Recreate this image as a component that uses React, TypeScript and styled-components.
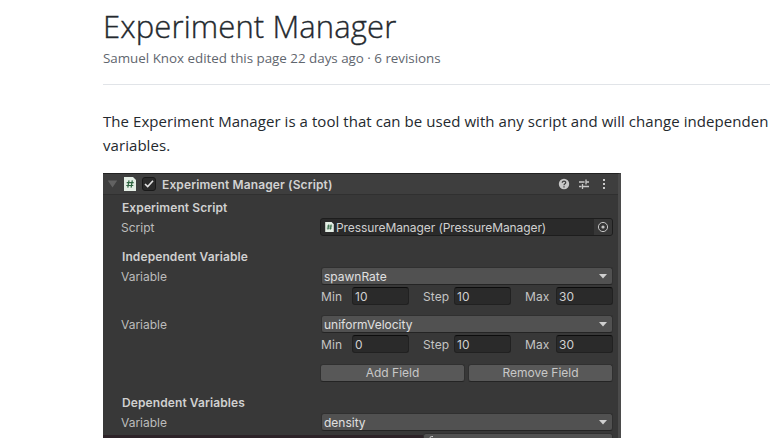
import React from "react";
import styled, { createGlobalStyle } from "styled-components";

const GlobalStyle = createGlobalStyle`
  * { box-sizing: border-box; }
  html, body { margin: 0; height: 438px; overflow: hidden; background: #fff; }
`;

const Page = styled.main`
  width: 770px;
  height: 438px;
  padding-left: 103px;
  overflow: hidden;
  font-family: "Open Sans", "Noto Sans", sans-serif;
  color: #24292e;
`;

const Title = styled.h1`
  margin: 0;
  padding-top: 3px;
  height: 47px;
  font-size: 31px;
  line-height: 46px;
  font-weight: 300;
  -webkit-text-stroke: 0.35px #24292e;
  white-space: nowrap;
  letter-spacing: 0.11px;
`;

const Meta = styled.div`
  height: 38px;
  border-bottom: 1px solid #e1e4e8;
  font-size: 13.4px;
  line-height: 23px;
  color: #5f666e;
  white-space: nowrap;
  letter-spacing: -0.02px;
`;

const Intro = styled.p`
  margin: 24px 0 16px;
  width: 800px;
  height: 48px;
  font-size: 15px;
  line-height: 24px;
  white-space: nowrap;
  letter-spacing: 0.06px;
`;

const Panel = styled.section`
  width: 518px;
  height: 265px;
  overflow: hidden;
  border-top: 1px solid #222;
  border-right: 3px solid #4b4b4b;
  background: #383838;
  color: #c4c4c4;
  font-family: Inter, sans-serif;
  font-size: 12px;
  white-space: nowrap;
`;

const Header = styled.header`
  display: flex;
  align-items: center;
  height: 21px;
  padding: 0 8px 0 4px;
  background: #3e3e3e;
  border-bottom: 1px solid #303030;
`;

const HeaderTitle = styled.span`
  flex: 1;
  margin-left: 6px;
  font-weight: 600;
  color: #d2d2d2;
  letter-spacing: 0.12px;
`;

const Check = styled.span`
  display: flex;
  width: 14px;
  height: 14px;
  margin-left: 6px;
  border: 1px solid #191919;
  border-radius: 3px;
  background: #2a2a2a;
`;

const Tools = styled.span`
  display: flex;
  gap: 8px;
`;

const Row = styled.div<{ $top?: number }>`
  display: flex;
  align-items: center;
  height: 18px;
  margin-top: ${(p) => p.$top ?? 0}px;
  padding-left: 18px;
`;

const Heading = styled.h2`
  margin: 0 0 0 1px;
  font-size: 12px;
  font-weight: 600;
  line-height: 18px;
  color: #d0d0d0;
  letter-spacing: 0.1px;
`;

const Label = styled.span`
  width: 199px;
  flex: none;
  color: #bcbcbc;
`;

const ObjectField = styled.div`
  display: flex;
  align-items: center;
  width: 293px;
  height: 18px;
  padding-left: 4px;
  gap: 2px;
  border: 1px solid #1d1d1d;
  border-radius: 3px;
  background: #2a2a2a;
  overflow: hidden;
`;

const ObjectName = styled.span`
  flex: 1;
  color: #d0d0d0;
  letter-spacing: -0.08px;
`;

const Picker = styled.span`
  display: flex;
  align-items: center;
  justify-content: center;
  width: 18px;
  height: 16px;
  background: #373737;
`;

const Select = styled.div`
  display: flex;
  align-items: center;
  justify-content: space-between;
  width: 292px;
  height: 18px;
  margin-left: 1px;
  padding: 0 5px 0 2px;
  border: 1px solid #303030;
  border-bottom-color: #242424;
  border-radius: 3px;
  background: #515151;
  color: #e0e0e0;
`;

const Range = styled.div`
  display: flex;
  align-items: center;
  height: 18px;
  margin: 2px 0 0 218px;
`;

const RangeLabel = styled.span`
  width: 31px;
  flex: none;
  letter-spacing: 0.1px;
`;

const NumberBox = styled.span`
  width: 57px;
  flex: none;
  height: 18px;
  margin-right: 14px;
  padding-left: 2px;
  border: 1px solid #212121;
  border-top-color: #0d0d0d;
  border-radius: 3px;
  background: #2a2a2a;
  color: #d0d0d0;
  line-height: 17px;
`;

const Buttons = styled.div`
  display: flex;
  gap: 3px;
  margin: 11px 0 0 217px;
`;

const Button = styled.button`
  width: 145px;
  height: 18px;
  padding: 0;
  border: 1px solid #303030;
  border-bottom-color: #242424;
  border-radius: 3px;
  background: #585858;
  color: #c8c8c8;
  font: inherit;
  line-height: 16px;
`;

const NextField = styled.div`
  display: flex;
  height: 7px;
  overflow: hidden;
`;

const DarkEdge = styled.span`
  width: 320px;
  height: 3px;
  margin-top: 4px;
  background: #2d2328;
`;

const PartialSelect = styled.span`
  width: 190px;
  height: 18px;
  margin-top: 2px;
  padding-left: 5px;
  border: 1px solid #303030;
  border-radius: 3px;
  background: #515151;
  line-height: 0;
`;

const ScriptIcon = ({ width, height }: { width: number; height: number }) => (
  <svg width={width} height={height} viewBox="0 0 12 14">
    <path d="M0 0H9L12 3V14H0Z" fill="#e4eee5" />
    <path d="M5 3.4 3.8 10.7M8.3 3.4 7.1 10.7M2.7 5.7H9.7M2.3 8.5H9.3" stroke="#2d6440" strokeWidth="1.2" />
  </svg>
);

const HeaderScriptIcon = styled.span`
  display: flex;
  margin-left: 6px;
`;

const Caret = () => (
  <svg width="8" height="5" viewBox="0 0 8 5"><path d="M0 0H8L4 4.5Z" fill="#d0d0d0" /></svg>
);

const Dropdown = ({ value }: { value: string }) => (
  <Select><span>{value}</span><Caret /></Select>
);

const RangeFields = ({ values }: { values: [string, string, string] }) => (
  <Range>
    {["Min", "Step", "Max"].map((name, i) => (
      <React.Fragment key={name}>
        <RangeLabel>{name}</RangeLabel>
        <NumberBox>{values[i]}</NumberBox>
      </React.Fragment>
    ))}
  </Range>
);

export default function App() {
  return (
    <Page>
      <GlobalStyle />
      <Title>Experiment Manager</Title>
      <Meta>Samuel Knox edited this page 22 days ago · 6 revisions</Meta>
      <Intro>
        The Experiment Manager is a tool that can be used with any script and will change independen
        <br />
        variables.
      </Intro>
      <Panel>
        <Header>
          <svg width="11" height="8" viewBox="0 0 11 8"><path d="M.8 .5H10.2L5.5 7.5Z" fill="#626262" /></svg>
          <HeaderScriptIcon><ScriptIcon width={12} height={14} /></HeaderScriptIcon>
          <Check>
            <svg width="12" height="12" viewBox="0 0 12 12"><path d="m2 6 2.7 2.6L10 2.8" fill="none" stroke="#e2e2e2" strokeWidth="1.6" /></svg>
          </Check>
          <HeaderTitle>Experiment Manager (Script)</HeaderTitle>
          <Tools>
            <svg width="12" height="12" viewBox="0 0 12 12">
              <circle cx="6" cy="6" r="5.2" fill="#c8c8c8" />
              <path d="M4.3 4.7c0-2.2 3.5-2 3.4 0C7.7 5.8 6 5.8 6 7.2M6 8.2V9.4" fill="none" stroke="#3e3e3e" strokeWidth="1.25" />
            </svg>
            <svg width="12" height="12" viewBox="0 0 12 12">
              <path d="M1 4H6.5M8 4H11M8 1.5V6.5M1 8.5H3.5M5 8.5H11M4.5 6V11" stroke="#c8c8c8" strokeWidth="1.3" />
            </svg>
            <svg width="12" height="12" viewBox="0 0 12 12">
              <path d="M5 1h2v2H5ZM5 5h2v2H5ZM5 9h2v2H5Z" fill="#c8c8c8" />
            </svg>
          </Tools>
        </Header>
        <Row $top={4}><Heading>Experiment Script</Heading></Row>
        <Row $top={1}>
          <Label>Script</Label>
          <ObjectField>
            <ScriptIcon width={9} height={10} />
            <ObjectName>PressureManager (PressureManager)</ObjectName>
            <Picker>
              <svg width="12" height="12" viewBox="0 0 12 12">
                <circle cx="6" cy="6" r="4.6" fill="none" stroke="#c4c4c4" />
                <circle cx="6" cy="6" r="1.6" fill="#c4c4c4" />
              </svg>
            </Picker>
          </ObjectField>
        </Row>
        <Row $top={12}><Heading>Independent Variable</Heading></Row>
        <Row $top={1}><Label>Variable</Label><Dropdown value="spawnRate" /></Row>
        <RangeFields values={["10", "10", "30"]} />
        <Row $top={10}><Label>Variable</Label><Dropdown value="uniformVelocity" /></Row>
        <RangeFields values={["0", "10", "30"]} />
        <Buttons><Button>Add Field</Button><Button>Remove Field</Button></Buttons>
        <Row $top={12}><Heading>Dependent Variables</Heading></Row>
        <Row $top={1}><Label>Variable</Label><Dropdown value="density" /></Row>
        <NextField>
          <DarkEdge />
          <PartialSelect>
            <svg width="5" height="4" viewBox="0 0 5 4"><path d="M1 4C1 2.6 2 2.5 4 2.6" fill="none" stroke="#d0d0d0" /></svg>
          </PartialSelect>
        </NextField>
      </Panel>
    </Page>
  );
}
